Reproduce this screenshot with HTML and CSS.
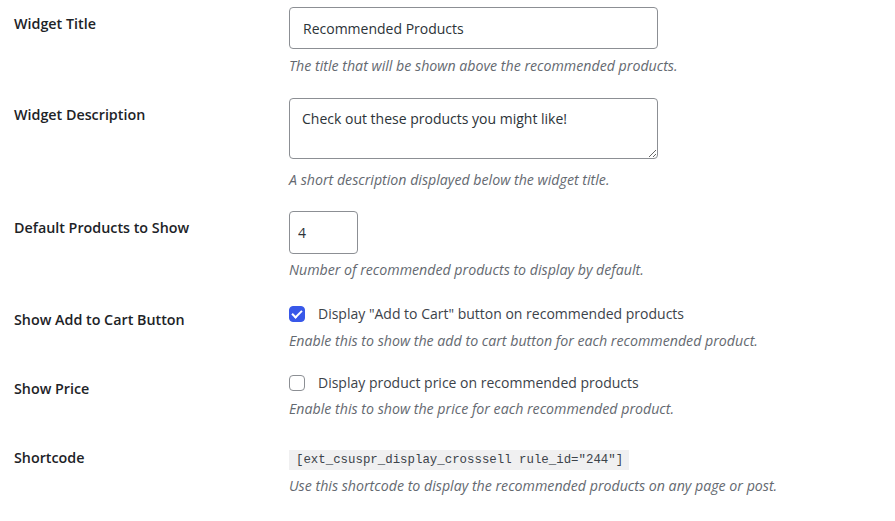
FILE: index.html
```html
<!DOCTYPE html>
<html lang="en">
<head>
    <meta charset="UTF-8">
    <meta name="viewport" content="width=device-width, initial-scale=1.0">
    <title>Widget Settings</title>
    <link rel="stylesheet" href="styles.css">
</head>
<body>
    <div class="form-table">
        <div class="form-row">
            <label class="row-label" for="widget_title">Widget Title</label>
            <div class="row-field">
                <input type="text" id="widget_title" class="text-input" value="Recommended Products">
                <p class="description">The title that will be shown above the recommended products.</p>
            </div>
        </div>

        <div class="form-row">
            <label class="row-label" for="widget_desc">Widget Description</label>
            <div class="row-field">
                <textarea id="widget_desc" class="text-area">Check out these products you might like!</textarea>
                <p class="description after-area">A short description displayed below the widget title.</p>
            </div>
        </div>

        <div class="form-row count-row">
            <label class="row-label" for="default_count">Default Products to Show</label>
            <div class="row-field">
                <input type="number" id="default_count" class="small-input" value="4">
                <p class="description">Number of recommended products to display by default.</p>
            </div>
        </div>

        <div class="form-row check-row cart-row">
            <span class="row-label">Show Add to Cart Button</span>
            <div class="row-field">
                <label class="check-line">
                    <input type="checkbox" class="check" checked>
                    Display "Add to Cart" button on recommended products
                </label>
                <p class="description">Enable this to show the add to cart button for each recommended product.</p>
            </div>
        </div>

        <div class="form-row check-row price-row">
            <span class="row-label">Show Price</span>
            <div class="row-field">
                <label class="check-line">
                    <input type="checkbox" class="check">
                    Display product price on recommended products
                </label>
                <p class="description">Enable this to show the price for each recommended product.</p>
            </div>
        </div>

        <div class="form-row shortcode-row">
            <span class="row-label">Shortcode</span>
            <div class="row-field">
                <div class="code-line"><code>[ext_csuspr_display_crosssell rule_id="244"]</code></div>
                <p class="description">Use this shortcode to display the recommended products on any page or post.</p>
            </div>
        </div>
    </div>
</body>
</html>
```

FILE: styles.css
```css
body {
    margin: 0;
    padding: 7px 0 0 14px;
    background: #fff;
    font-family: "Open Sans", Arial, sans-serif;
    font-size: 14px;
    color: #3c434a;
}

.form-row {
    display: grid;
    grid-template-columns: 275px 1fr;
    margin-top: 22px;
}

.form-row:first-child {
    margin-top: 0;
}

.row-label {
    padding-top: 8px;
    font-weight: 600;
    font-size: 14.3px;
    line-height: 18px;
    color: #1d2327;
}

.row-field {
    display: flex;
    flex-direction: column;
    align-items: flex-start;
}

.text-input, .text-area, .small-input {
    box-sizing: border-box;
    margin: 0;
    border: 1px solid #8c8f94;
    border-radius: 4px;
    background: #fff;
    font-family: inherit;
    font-size: 14px;
    color: #2c3338;
    outline: none;
}

.text-input {
    width: 369px;
    height: 42px;
    padding: 0 13px;
}

.text-area {
    width: 369px;
    height: 61px;
    padding: 10px 12px;
    line-height: 20px;
}

.small-input {
    width: 69px;
    height: 43px;
    padding: 0 8px;
    -moz-appearance: textfield;
}

.small-input::-webkit-inner-spin-button,
.small-input::-webkit-outer-spin-button {
    -webkit-appearance: none;
    margin: 0;
}

.count-row {
    margin-top: 21px;
}

.count-row .description {
    margin-top: 6px;
}

.description {
    margin: 7px 0 0;
    font-style: italic;
    font-size: 14.2px;
    line-height: 20px;
    color: #646970;
}

.after-area {
    margin-top: 11px;
}

.check-row .row-label {
    padding-top: 7px;
}

.cart-row {
    margin-top: 24px;
}

.price-row .description {
    margin-top: 6px;
}

.check-line {
    display: flex;
    align-items: center;
    height: 20px;
    line-height: 20px;
    color: #3c434a;
}

.check {
    -webkit-appearance: none;
    appearance: none;
    position: relative;
    box-sizing: border-box;
    width: 16px;
    height: 16px;
    margin: 0 13px 0 0;
    border: 1px solid #8c8f94;
    border-radius: 4px;
    background: #fff;
}

.check:checked {
    border-color: #3858e9;
    background: #3858e9;
}

/* marca de verificação */
.check:checked::after {
    content: "";
    position: absolute;
    left: 4px;
    top: 1px;
    width: 4px;
    height: 8px;
    border: solid #fff;
    border-width: 0 2px 2px 0;
    transform: rotate(45deg);
}

.shortcode-row {
    margin-top: 29px;
}

.shortcode-row .row-label {
    padding-top: 1px;
}

.code-line {
    height: 20px;
}

code {
    display: inline-block;
    padding: 3px 6px 3px 7px;
    background: #f0f0f1;
    font-family: "Liberation Mono", "DejaVu Sans Mono", monospace;
    font-size: 12.4px;
    line-height: 14px;
    color: #3c434a;
}

.shortcode-row .description {
    margin-top: 8px;
}
```
